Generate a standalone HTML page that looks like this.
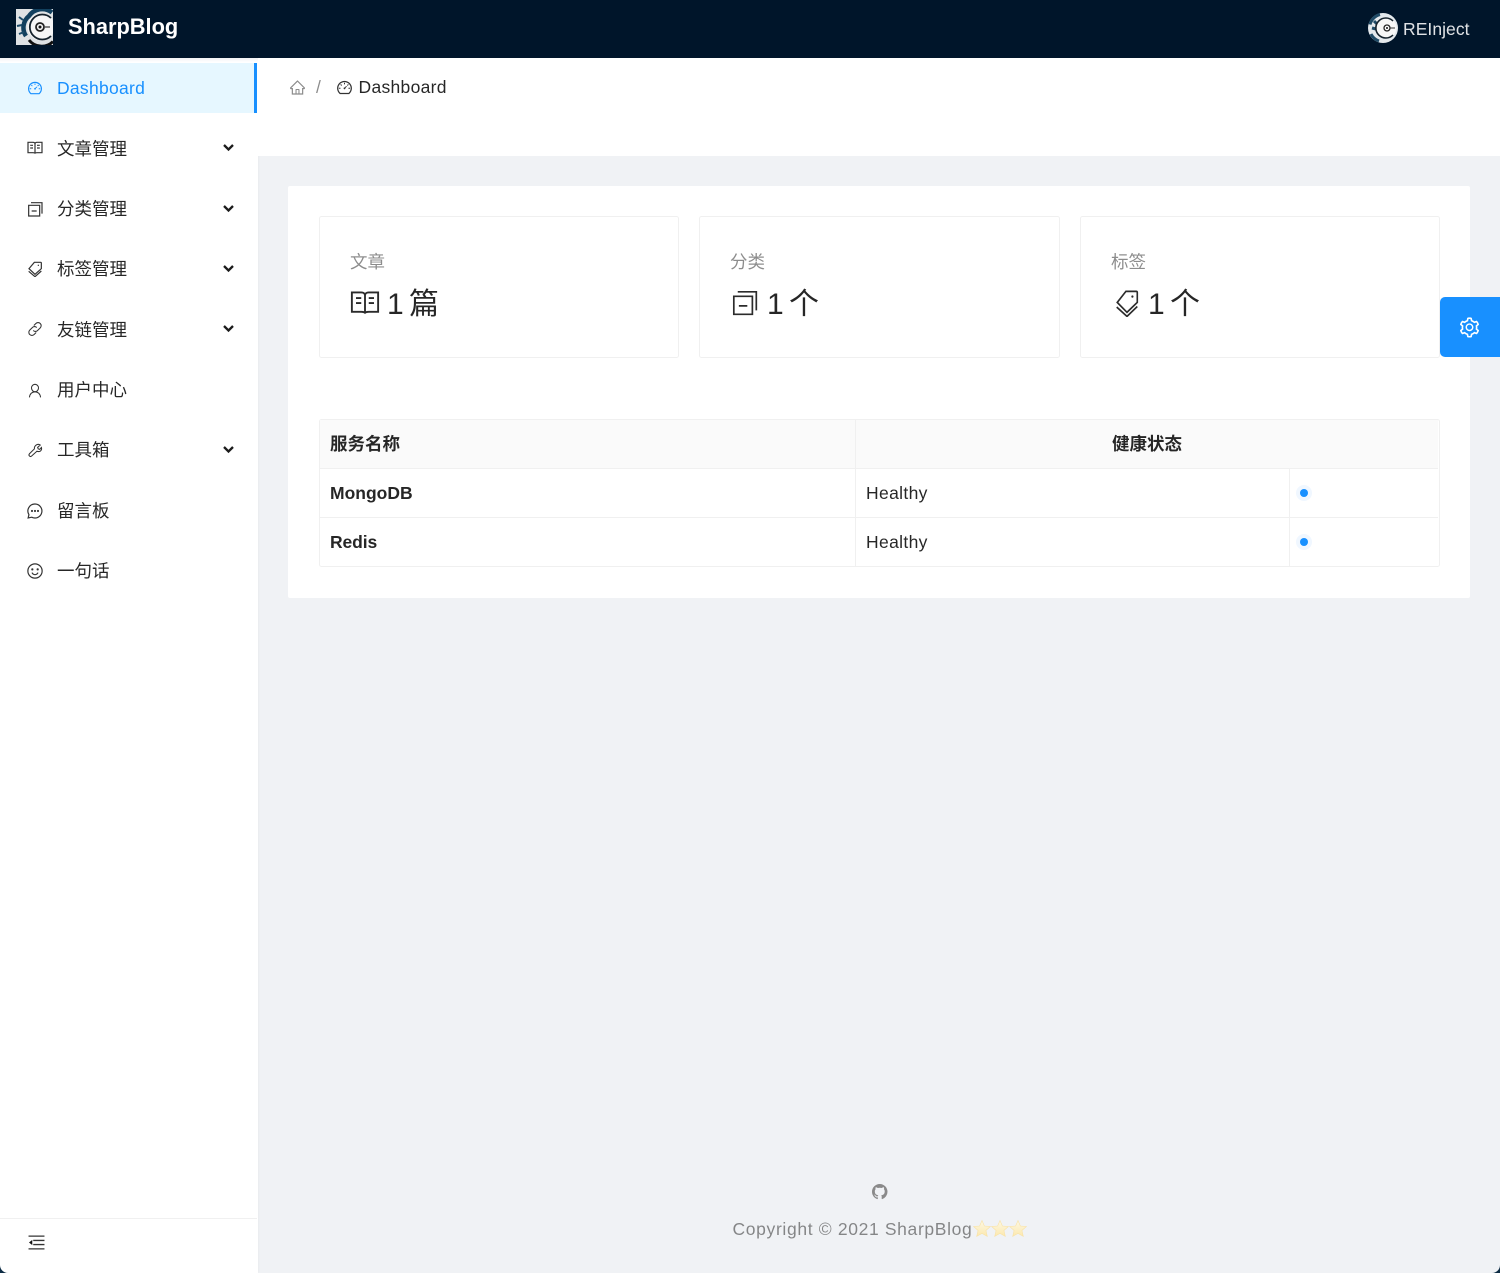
<!DOCTYPE html>
<html lang="zh"><head><meta charset="utf-8"><title>SharpBlog</title>
<style>
*{box-sizing:border-box}
html,body{margin:0;padding:0}
body{width:1500px;height:1273px;overflow:hidden;position:relative;background:#f0f2f5;font-family:"Liberation Sans","Noto Sans CJK SC",sans-serif;font-size:17.5px;color:rgba(0,0,0,.85)}
.a{position:absolute}
.t{position:absolute;white-space:nowrap;line-height:26px;height:26px}
.m{position:absolute;left:57px;white-space:nowrap;line-height:26px;height:26px;color:rgba(0,0,0,.85)}
svg{position:absolute;display:block;overflow:visible}
.i{width:16px;height:16px;left:27px;fill:none;stroke:#333;stroke-width:1.8}
.c{left:222.500px;width:11px;height:7px;fill:none;stroke:#1c1c1c;stroke-width:2.3}
.card{position:absolute;top:216px;height:142px;background:#fff;border:1.25px solid #f0f0f0;border-radius:2.5px}
.lab{position:absolute;top:249px;line-height:26px;height:26px;color:rgba(0,0,0,.45);white-space:nowrap}
.val{position:absolute;top:285px;line-height:40px;height:40px;font-size:30px;color:rgba(0,0,0,.85);white-space:nowrap;word-spacing:-3px}
.si{width:30px;height:30px;fill:none;stroke:#2b2b2b;stroke-width:1.5}
.b{font-weight:700;color:rgba(0,0,0,.85)}
</style></head><body>
<svg width="0" height="0" style="position:absolute"><defs>
<symbol id="gauge" viewBox="0 0 1024 1024"><path d="M924.8 385.6a446.7 446.7 0 0 0-96-142.4 446.7 446.7 0 0 0-142.4-96C631.1 123.8 572.5 112 512 112s-119.1 11.8-174.4 35.2a446.7 446.7 0 0 0-142.4 96 446.7 446.7 0 0 0-96 142.4C75.8 440.9 64 499.5 64 560c0 132.7 58.3 257.7 159.9 343.1l1.7 1.4c5.8 4.8 13.1 7.5 20.6 7.5h531.7c7.5 0 14.8-2.7 20.6-7.5l1.7-1.4C901.7 817.7 960 692.7 960 560c0-60.5-11.9-119.1-35.2-174.4zM761.4 836H262.6A371.12 371.12 0 0 1 140 560c0-99.4 38.7-192.8 109-263 70.3-70.3 163.7-109 263-109 99.4 0 192.8 38.7 263 109 70.3 70.3 109 163.7 109 263 0 105.6-44.5 205.5-122.6 276zM623.5 421.5a8.03 8.03 0 0 0-11.3 0L527.7 506c-18.7-5-39.4-.2-54.1 14.5a55.95 55.95 0 0 0 0 79.2 55.95 55.95 0 0 0 79.2 0 55.87 55.87 0 0 0 14.5-54.1l84.5-84.5c3.1-3.1 3.1-8.2 0-11.3l-28.3-28.3zM490 320h44c4.4 0 8-3.6 8-8v-80c0-4.4-3.6-8-8-8h-44c-4.4 0-8 3.6-8 8v80c0 4.4 3.6 8 8 8zm260 218v44c0 4.4 3.6 8 8 8h80c4.4 0 8-3.6 8-8v-44c0-4.4-3.6-8-8-8h-80c-4.4 0-8 3.6-8 8zm12.7-197.2l-31.1-31.1a8.03 8.03 0 0 0-11.3 0l-56.6 56.6a8.03 8.03 0 0 0 0 11.3l31.1 31.1c3.1 3.1 8.2 3.1 11.3 0l56.6-56.6c3.1-3.1 3.1-8.2 0-11.3zm-458.6-31.1a8.03 8.03 0 0 0-11.3 0l-31.1 31.1a8.03 8.03 0 0 0 0 11.3l56.6 56.6c3.1 3.1 8.2 3.1 11.3 0l31.1-31.1c3.1-3.1 3.1-8.2 0-11.3l-56.6-56.6zM262 530h-80c-4.4 0-8 3.6-8 8v44c0 4.4 3.6 8 8 8h80c4.4 0 8-3.6 8-8v-44c0-4.4-3.6-8-8-8z"/></symbol>
<symbol id="book" viewBox="0 0 24 24"><path d="M1.5 3.500H9c1.800 0 3 1 3 2.500 0-1.500 1.200-2.500 3-2.500h7.500V19H15c-1.800 0-3 .6-3 1.500 0-.9-1.200-1.500-3-1.500H1.500zM12 6v14.500M4.800 8h4.200M4.800 12h4.200M15 8h4.200M15 12h4.200"/></symbol>
<symbol id="cat" viewBox="0 0 24 24"><path d="M2.500 6.500h16.500v16H2.500zM6 2.500h16.500v16.500M7 15h7.500"/></symbol>
<symbol id="tag" viewBox="0 0 24 24"><path d="M11 2h9.500c.8 0 1 .5 1 1v8.500L12 20 3 11.500zM2.500 15.500 12 23.500l9.500-8.500"/><circle cx="17" cy="6.500" r="1" fill="currentColor" stroke="none"/></symbol>
</defs></svg>

<!-- header -->
<div class="a" style="left:0;top:0;width:1500px;height:57.500px;background:#00152a"></div>
<svg style="left:16px;top:9px;overflow:hidden" width="37" height="36" viewBox="0 0 37 36"><rect width="37" height="36" fill="#dfe2e4"/><path d="M10 27A15 15 0 0 1 13 7 A16 16 0 0 1 36 3.500" fill="none" stroke="#12405e" stroke-width="4.500"/><circle cx="25" cy="18" r="13.500" fill="#f6f6f6"/><path d="M35 9A12.500 12.500 0 1 0 35 27" fill="none" stroke="#15222c" stroke-width="1.800"/><path d="M13 31a16 16 0 0 0 24 1.500" fill="none" stroke="#111" stroke-width="3"/><circle cx="24" cy="18" r="4" fill="#f4f4f4" stroke="#222" stroke-width="1.800"/><circle cx="24" cy="18" r="1.500" fill="#111"/><path d="M28 18h6" stroke="#444" stroke-width="1.300"/><path d="M1 17l5-1M3 25l5-2M3 8l4 3" stroke="#1b4a68" stroke-width="2"/></svg>
<div class="t" style="left:68px;top:14px;font-size:21.800px;font-weight:700;color:#fff">SharpBlog</div>
<svg style="left:1368px;top:13px" width="30" height="30" viewBox="0 0 30 30"><circle cx="15" cy="15" r="15" fill="#e4e9ed"/><path d="M12 1.500a14 14 0 0 0-10 10M3 21a14 14 0 0 0 8 7M6 8l3 3M4 15l4 1" fill="none" stroke="#1f4a66" stroke-width="3"/><circle cx="18" cy="15" r="10.500" fill="#f7f7f7"/><path d="M25 8a10 10 0 1 0 0 14" fill="none" stroke="#15222c" stroke-width="1.600"/><circle cx="19" cy="15" r="3" fill="#fff" stroke="#222" stroke-width="1.300"/><circle cx="19" cy="15" r="1" fill="#111"/><path d="M22 15h5" stroke="#333" stroke-width="1"/></svg>
<div class="t" style="left:1403px;top:16px;color:rgba(255,255,255,.88);letter-spacing:.05px">REInject</div>

<!-- sidebar -->
<div class="a" style="left:0;top:58px;width:257.500px;height:1215px;background:#fff;box-shadow:1px 0 2px rgba(0,21,41,.03)"></div>
<div class="a" style="left:0;top:57.500px;width:1500px;height:4px;background:linear-gradient(#f2f3f5,#fff)"></div>
<div class="a" style="left:0;top:63px;width:257px;height:50px;background:#e6f7ff;border-right:3.750px solid #1890ff"></div>
<svg class="i" style="top:79.500px;fill:#1890ff;stroke:none"><use href="#gauge"/></svg>
<div class="m" style="top:75px;color:#1890ff;letter-spacing:.28px">Dashboard</div>

<svg class="i" style="top:140px" viewBox="0 0 24 24"><use href="#book"/></svg>
<div class="m" style="top:135.500px">文章管理</div>
<svg class="c" style="top:144px" viewBox="0 0 11 7"><path d="M1 1l4.500 4.500L10 1"/></svg>

<svg class="i" style="top:201px" viewBox="0 0 24 24"><use href="#cat"/></svg>
<div class="m" style="top:196px">分类管理</div>
<svg class="c" style="top:204.500px" viewBox="0 0 11 7"><path d="M1 1l4.500 4.500L10 1"/></svg>

<svg class="i" style="top:260.500px;color:#333" viewBox="0 0 24 24"><use href="#tag"/></svg>
<div class="m" style="top:256px">标签管理</div>
<svg class="c" style="top:264.500px" viewBox="0 0 11 7"><path d="M1 1l4.500 4.500L10 1"/></svg>

<svg class="i" style="top:322px;left:28px;width:14px;height:14px" viewBox="0 0 24 24"><path d="M10 6l3.500-3.500a5 5 0 0 1 7.500 7.500l-5 5a5 5 0 0 1-7-.5M14 18l-3.500 3.500A5 5 0 0 1 3 14l5-5a5 5 0 0 1 7 .5"/></svg>
<div class="m" style="top:316.500px">友链管理</div>
<svg class="c" style="top:325px" viewBox="0 0 11 7"><path d="M1 1l4.500 4.500L10 1"/></svg>

<svg class="i" style="top:382.500px;left:28px;width:14px;height:15px" viewBox="0 0 24 24" preserveAspectRatio="none"><circle cx="12" cy="8" r="6"/><path d="M2.500 23c.5-5.500 4.500-9 9.500-9s9 3.500 9.500 9"/></svg>
<div class="m" style="top:377px">用户中心</div>

<svg class="i" style="top:443px;left:28px;width:14px;height:14px" viewBox="0 0 24 24"><path d="M14 3.500c2-1.500 5-1.500 7 0l-4.500 4 1 2.500 2.500 1 3-3.500c1 3-.5 6.500-3.500 7-2 .5-3 0-4-.5L6 22.500c-1 .8-2.500.8-3.500-.3-1-1-1-2.500-.2-3.500L11 10c-.5-2.500 1-5 3-6.500z"/></svg>
<div class="m" style="top:437px">工具箱</div>
<svg class="c" style="top:446px" viewBox="0 0 11 7"><path d="M1 1l4.500 4.500L10 1"/></svg>

<svg class="i" style="top:503px" viewBox="0 0 24 24"><path d="M12 1.500a10.500 10.500 0 1 1-5 19.800L1.700 22.500l1.200-5A10.500 10.500 0 0 1 12 1.500z"/><circle cx="7.500" cy="12" r=".7" fill="#333"/><circle cx="12" cy="12" r=".7" fill="#333"/><circle cx="16.500" cy="12" r=".7" fill="#333"/></svg>
<div class="m" style="top:498px">留言板</div>

<svg class="i" style="top:563px" viewBox="0 0 24 24"><circle cx="12" cy="12" r="10.700"/><circle cx="8" cy="9.500" r=".8" fill="#333"/><circle cx="16" cy="9.500" r=".8" fill="#333"/><path d="M7.500 14.500c1 2 2.700 3 4.500 3s3.500-1 4.500-3"/></svg>
<div class="m" style="top:558px">一句话</div>

<div class="a" style="left:0;top:1218px;width:257px;height:1.250px;background:#f0f0f0"></div>
<svg style="left:28px;top:1235px" width="17" height="15" viewBox="0 0 17 16"><path d="M0 1.200h17M5 5.800h12M5 10.200h12M0 14.800h17" stroke="#333" stroke-width="1.400" fill="none"/><path d="M.5 8l3.500-2.800v5.600z" fill="#111"/></svg>

<!-- page header -->
<div class="a" style="left:257.500px;top:58px;width:1242.500px;height:98px;background:#fff"></div>
<svg style="left:288.500px;top:79px;fill:rgba(0,0,0,.45)" width="17" height="17" viewBox="0 0 1024 1024"><path d="M946.5 505L560.1 118.8l-25.900-25.900a31.500 31.500 0 0 0-44.400 0L77.500 505a63.900 63.900 0 0 0-18.800 46c.4 35.200 29.700 63.300 64.900 63.300h42.500V940h691.800V614.300h43.400c17.100 0 33.200-6.700 45.300-18.800a63.600 63.600 0 0 0 18.700-45.300c0-17-6.700-33.100-18.800-45.200zM568 868H456V664h112v204zm217.900-325.700V868H632V640c0-22.100-17.900-40-40-40H432c-22.100 0-40 17.900-40 40v228H238.100V542.300h-96l370-369.700 23.100 23.100L882 542.300h-96.100z"/></svg>
<div class="t" style="left:316px;top:74px;color:rgba(0,0,0,.45)">/</div>
<svg style="left:336px;top:78.500px;fill:rgba(0,0,0,.8)" width="17" height="17"><use href="#gauge"/></svg>
<div class="t" style="left:358.500px;top:74px;color:rgba(0,0,0,.85);letter-spacing:.3px">Dashboard</div>

<!-- main card -->
<div class="a" style="left:288px;top:186px;width:1182px;height:412px;background:#fff;border-radius:2px"></div>
<div class="card" style="left:318.500px;width:360px"></div>
<div class="card" style="left:698.500px;width:361px"></div>
<div class="card" style="left:1079.500px;width:360px"></div>

<div class="lab" style="left:350px">文章</div>
<svg class="si" style="left:350px;top:288px" viewBox="0 0 24 24"><use href="#book"/></svg>
<div class="val" style="left:387px">1 篇</div>

<div class="lab" style="left:730px">分类</div>
<svg class="si" style="left:731px;top:289px;width:27px;height:27px" viewBox="0 0 24 24"><use href="#cat"/></svg>
<div class="val" style="left:767px">1 个</div>

<div class="lab" style="left:1111px">标签</div>
<svg class="si" style="left:1114px;top:289px;width:26px;height:28px;color:#2b2b2b" viewBox="0 0 24 24" preserveAspectRatio="none"><use href="#tag"/></svg>
<div class="val" style="left:1148px">1 个</div>

<!-- gear -->
<div class="a" style="left:1440px;top:297px;width:60px;height:60px;background:#1890ff;border-radius:5px 0 0 5px"></div>
<svg style="left:1458px;top:315.500px;fill:#fff" width="23" height="23" viewBox="0 0 1024 1024"><path d="M924.800 625.700l-65.500-56c3.100-19 4.700-38.400 4.700-57.800s-1.600-38.800-4.700-57.800l65.500-56a32.030 32.030 0 0 0 9.300-35.200l-.9-2.600a443.740 443.740 0 0 0-79.700-137.900l-1.800-2.100a32.120 32.120 0 0 0-35.100-9.500l-81.300 28.900c-30-24.600-63.500-44-99.700-57.600l-15.700-85a32.050 32.050 0 0 0-25.800-25.700l-2.700-.5c-52.100-9.400-106.900-9.400-159 0l-2.700.5a32.050 32.050 0 0 0-25.800 25.700l-15.800 85.400a351.860 351.860 0 0 0-99 57.400l-81.900-29.100a32 32 0 0 0-35.100 9.500l-1.800 2.100a446.020 446.020 0 0 0-79.700 137.900l-.9 2.600c-4.500 12.500-.8 26.500 9.300 35.200l66.300 56.600c-3.100 18.800-4.600 38-4.600 57.100 0 19.200 1.500 38.400 4.600 57.100L99 625.500a32.030 32.030 0 0 0-9.300 35.200l.9 2.600c18.100 50.400 44.900 96.900 79.700 137.900l1.800 2.100a32.120 32.120 0 0 0 35.100 9.500l81.900-29.100c29.800 24.500 63.100 43.900 99 57.400l15.800 85.400a32.050 32.050 0 0 0 25.800 25.700l2.700.5a449.400 449.400 0 0 0 159 0l2.700-.5a32.050 32.050 0 0 0 25.800-25.700l15.700-85a350 350 0 0 0 99.700-57.600l81.300 28.900a32 32 0 0 0 35.100-9.500l1.800-2.100c34.800-41.100 61.600-87.500 79.700-137.900l.9-2.600c4.500-12.300.8-26.300-9.300-35zM788.300 465.900c2.500 15.100 3.800 30.600 3.800 46.100s-1.300 31-3.800 46.100l-6.600 40.100 74.700 63.900a370.030 370.030 0 0 1-42.600 73.600L721 702.800l-31.400 25.800c-23.900 19.600-50.500 35-79.300 45.800l-38.100 14.300-17.900 97a377.500 377.500 0 0 1-85 0l-17.900-97.200-37.800-14.500c-28.500-10.800-55-26.200-78.700-45.700l-31.400-25.900-93.400 33.200c-17-22.900-31.200-47.600-42.600-73.600l75.500-64.500-6.500-40c-2.400-14.900-3.700-30.300-3.700-45.500 0-15.300 1.200-30.600 3.700-45.500l6.500-40-75.500-64.500c11.300-26.100 25.600-50.700 42.600-73.600l93.400 33.200 31.400-25.900c23.700-19.500 50.200-34.900 78.700-45.700l37.900-14.300 17.900-97.200c28.100-3.200 56.800-3.200 85 0l17.900 97 38.100 14.300c28.700 10.800 55.400 26.200 79.300 45.800l31.400 25.800 92.800-32.900c17 22.900 31.200 47.600 42.600 73.600L781.800 426l6.500 39.900zM512 326c-97.200 0-176 78.800-176 176s78.800 176 176 176 176-78.800 176-176-78.800-176-176-176zm79.200 255.200A111.600 111.600 0 0 1 512 614c-29.900 0-58-11.700-79.200-32.800A111.600 111.600 0 0 1 400 502c0-29.900 11.700-58 32.800-79.200C454 401.600 482.100 390 512 390c29.900 0 58 11.600 79.200 32.800A111.600 111.600 0 0 1 624 502c0 29.900-11.700 58-32.800 79.200z"/></svg>

<!-- table -->
<div class="a" style="left:318.500px;top:419px;width:1121px;height:148px;border:1.250px solid #f0f0f0;background:#fff;border-radius:2.500px"></div>
<div class="a" style="left:319.750px;top:420.250px;width:1118.500px;height:48px;background:#fafafa"></div>
<div class="a" style="left:319.750px;top:468px;width:1118.500px;height:1.250px;background:#f0f0f0"></div>
<div class="a" style="left:319.750px;top:517px;width:1118.500px;height:1.250px;background:#f0f0f0"></div>
<div class="a" style="left:854.800px;top:420px;width:1.250px;height:146px;background:#f0f0f0"></div>
<div class="a" style="left:1289px;top:469px;width:1.250px;height:97px;background:#f0f0f0"></div>
<div class="t b" style="left:330px;top:431px">服务名称</div>
<div class="t b" style="left:1112px;top:431px">健康状态</div>
<div class="t b" style="left:330px;top:480px">MongoDB</div>
<div class="t" style="left:866px;top:480px;letter-spacing:.35px">Healthy</div>
<div class="t b" style="left:330px;top:529px;letter-spacing:-.1px">Redis</div>
<div class="t" style="left:866px;top:529px;letter-spacing:.35px">Healthy</div>
<svg style="left:1294px;top:483px" width="20" height="20"><circle cx="10" cy="10" r="8" fill="#f0f7ff"/><circle cx="10" cy="10" r="4" fill="#1890ff"/></svg>
<svg style="left:1294px;top:532px" width="20" height="20"><circle cx="10" cy="10" r="8" fill="#f0f7ff"/><circle cx="10" cy="10" r="4" fill="#1890ff"/></svg>

<!-- footer -->
<svg style="left:872px;top:1183.500px;fill:#8a8a8a" width="15.500" height="15.500" viewBox="0 0 16 16"><path d="M8 0C3.580 0 0 3.580 0 8c0 3.540 2.290 6.530 5.470 7.590.4.070.55-.17.55-.38 0-.19-.01-.82-.01-1.490-2.010.37-2.530-.49-2.690-.94-.09-.23-.48-.94-.82-1.130-.28-.15-.68-.52-.01-.53.63-.01 1.080.58 1.230.82.720 1.210 1.870.87 2.330.66.070-.52.280-.87.510-1.070-1.780-.2-3.640-.89-3.640-3.950 0-.87.310-1.590.820-2.150-.08-.2-.36-1.020.08-2.120 0 0 .67-.21 2.200.82.640-.18 1.320-.27 2-.27.680 0 1.360.09 2 .27 1.530-1.040 2.200-.82 2.200-.82.440 1.100.160 1.920.080 2.120.510.560.820 1.270.820 2.150 0 3.070-1.870 3.750-3.650 3.950.290.250.540.730.540 1.480 0 1.070-.01 1.930-.01 2.200 0 .210.150.460.550.380A8.013 8.013 0 0016 8c0-4.420-3.580-8-8-8z"/></svg>
<div class="t" style="left:732.500px;top:1216px;color:rgba(0,0,0,.45);letter-spacing:.65px">Copyright © 2021 SharpBlog</div>
<svg style="left:972.500px;top:1220px" width="54" height="18" viewBox="0 0 54 18"><defs><linearGradient id="s" x1="0" y1="0" x2="0" y2="1"><stop offset="0" stop-color="#fdf8e4"/><stop offset="1" stop-color="#fce8ae"/></linearGradient><path id="st" d="M9 .5l2.400 5.500 6 .5-4.500 4 1.400 5.900L9 13.400l-5.300 3 1.400-5.900-4.500-4 6-.5z" fill="url(#s)" stroke="#f8e2a6" stroke-width=".6"/></defs><use href="#st"/><use href="#st" x="18"/><use href="#st" x="36"/></svg>

<!-- window corners -->
<svg style="left:0;top:1265px" width="8" height="8"><path d="M0 0v8h8A8 8 0 0 1 0 0z" fill="#0d2c44"/></svg>
<svg style="left:1492px;top:1265px" width="8" height="8"><path d="M8 0v8H0A8 8 0 0 0 8 0z" fill="#0d2c44"/></svg>
</body></html>
